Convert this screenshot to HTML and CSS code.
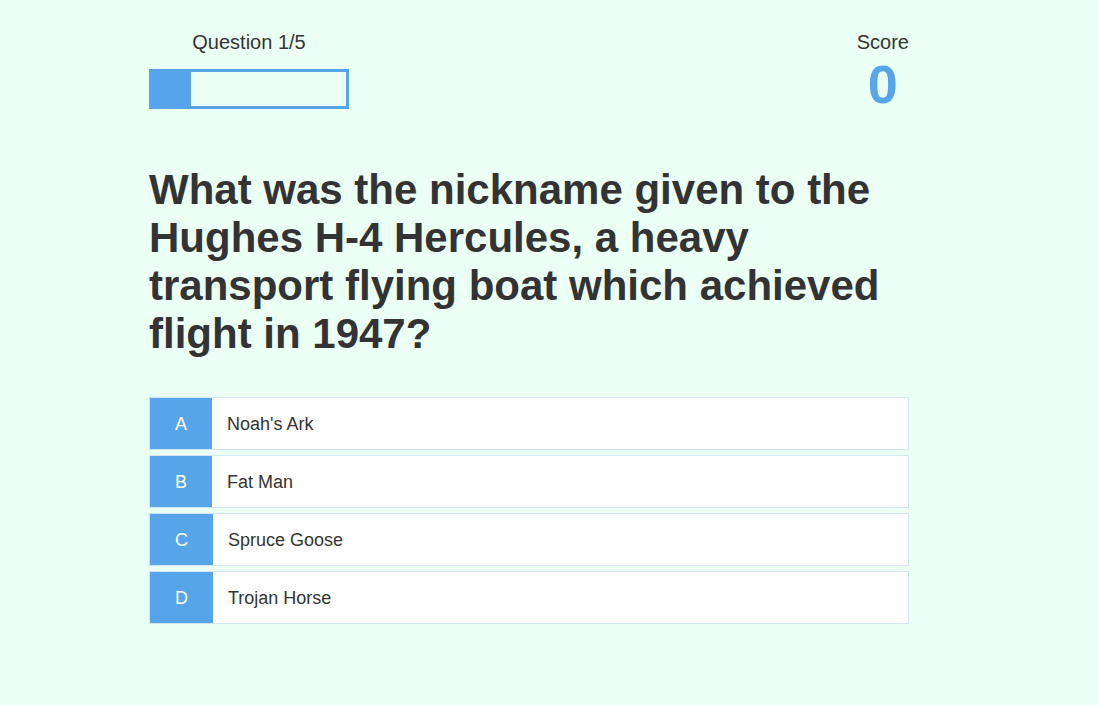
FILE: index.html
```html
<!DOCTYPE html>
<html lang="en">
<head>
<meta charset="UTF-8">
<title>Quiz</title>
<link rel="stylesheet" href="styles.css">
</head>
<body>
<div class="container">
  <div class="hud">
    <div class="hud-item">
      <p class="hud-prefix">Question 1/5</p>
      <div class="progress-bar"><div class="progress-fill" style="width: 20%"></div></div>
    </div>
    <div class="hud-item score-item">
      <p class="hud-prefix">Score</p>
      <p class="hud-main">0</p>
    </div>
  </div>
  <h2 class="question">What was the nickname given to the Hughes H-4 Hercules, a heavy transport flying boat which achieved flight in 1947?</h2>
  <div class="choice"><span class="choice-prefix">A</span><span class="choice-text">Noah's Ark</span></div>
  <div class="choice"><span class="choice-prefix">B</span><span class="choice-text">Fat Man</span></div>
  <div class="choice"><span class="choice-prefix">C</span><span class="choice-text">Spruce Goose</span></div>
  <div class="choice"><span class="choice-prefix">D</span><span class="choice-text">Trojan Horse</span></div>
</div>
</body>
</html>
```
FILE: styles.css
```css
html, body {
  margin: 0;
  padding: 0;
}
body {
  background: #ecfff4;
  color: #333;
  font-family: "Liberation Sans", Arial, sans-serif;
}
.container {
  width: 760px;
  margin-left: 149px;
  padding-top: 31px;
}
.hud {
  display: flex;
  justify-content: space-between;
  align-items: flex-start;
}
.hud-item {
  display: flex;
  flex-direction: column;
  align-items: center;
}
.hud-prefix {
  margin: 0;
  font-size: 20px;
  line-height: 23px;
}
.progress-bar {
  margin-top: 15px;
  width: 200px;
  height: 40px;
  box-sizing: border-box;
  border: 3px solid #56a5eb;
}
.progress-fill {
  height: 100%;
  background: #56a5eb;
}
.hud-main {
  margin: -1px 0 0;
  font-size: 54px;
  font-weight: bold;
  line-height: 62px;
  color: #56a5eb;
}
.question {
  margin: 51px 0 39px;
  font-size: 42px;
  line-height: 48px;
  font-weight: bold;
}
.choice {
  display: flex;
  height: 53px;
  box-sizing: border-box;
  margin-bottom: 5px;
  background: #fff;
  border: 1px solid #d2e6f2;
  font-size: 18px;
}
.choice-prefix {
  display: flex;
  align-items: center;
  padding: 2px 25px 0;
  background: #56a5eb;
  color: #fff;
}
.choice-text {
  display: flex;
  align-items: center;
  padding: 2px 0 0 15px;
}
```
